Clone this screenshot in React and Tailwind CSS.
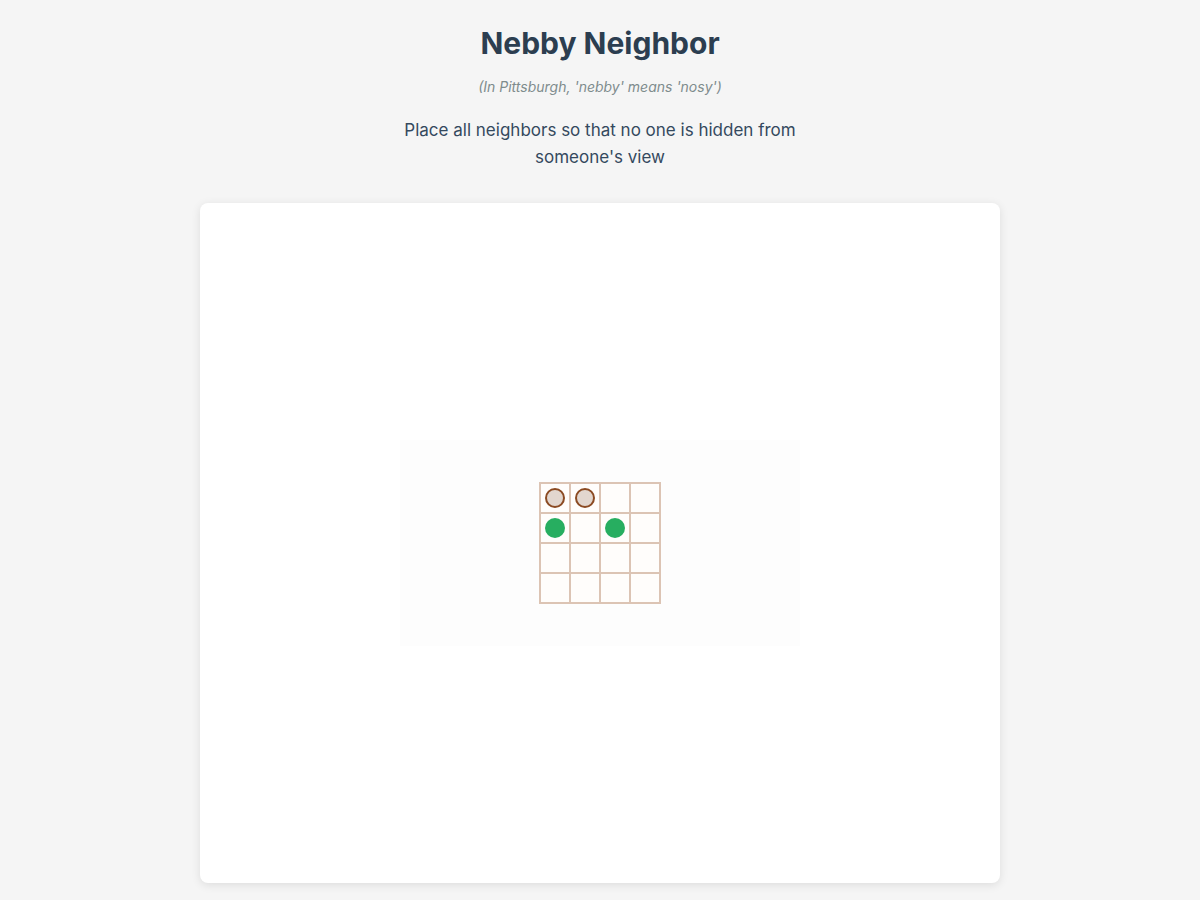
import React from "react";

const GRID = [
  ["hidden", "hidden", null, null],
  ["seen", null, "seen", null],
  [null, null, null, null],
  [null, null, null, null],
];

function Cell({ kind }) {
  return (
    <div className="w-[28px] h-[28px] bg-[#fffdfb] flex items-center justify-center">
      {kind === "hidden" && (
        <div className="w-[20px] h-[20px] rounded-full border-2 border-[#8b4a22] bg-[#e2d6ce]" />
      )}
      {kind === "seen" && <div className="w-[20px] h-[20px] rounded-full bg-[#27ae60]" />}
    </div>
  );
}

export default function App() {
  return (
    <div
      className="min-h-[900px] bg-[#f5f5f5] flex flex-col items-center pt-[25px]"
      style={{ fontFamily: "Inter, 'Noto Sans', sans-serif" }}
    >
      <h1 className="text-[30px] leading-[36px] font-bold text-[#2c3e50]">Nebby Neighbor</h1>
      <p className="mt-[16px] text-[14px] leading-[20px] italic text-[#7f8c8d]">
        (In Pittsburgh, 'nebby' means 'nosy')
      </p>
      <p className="mt-[20px] w-[400px] text-center text-[17px] leading-[27px] text-[#34495e]">
        Place all neighbors so that no one is hidden from someone's view
      </p>

      <div className="mt-[32px] w-[800px] h-[680px] bg-white rounded-lg shadow-[0_2px_10px_rgba(0,0,0,0.1)] flex items-center justify-center">
        <div className="w-[400px] h-[206px] bg-[#fdfdfd] flex items-center justify-center">
          <div className="grid grid-cols-4 gap-[2px] p-[2px] bg-[#dcc4b4]">
            {GRID.flat().map((kind, i) => (
              <Cell key={i} kind={kind} />
            ))}
          </div>
        </div>
      </div>
    </div>
  );
}
